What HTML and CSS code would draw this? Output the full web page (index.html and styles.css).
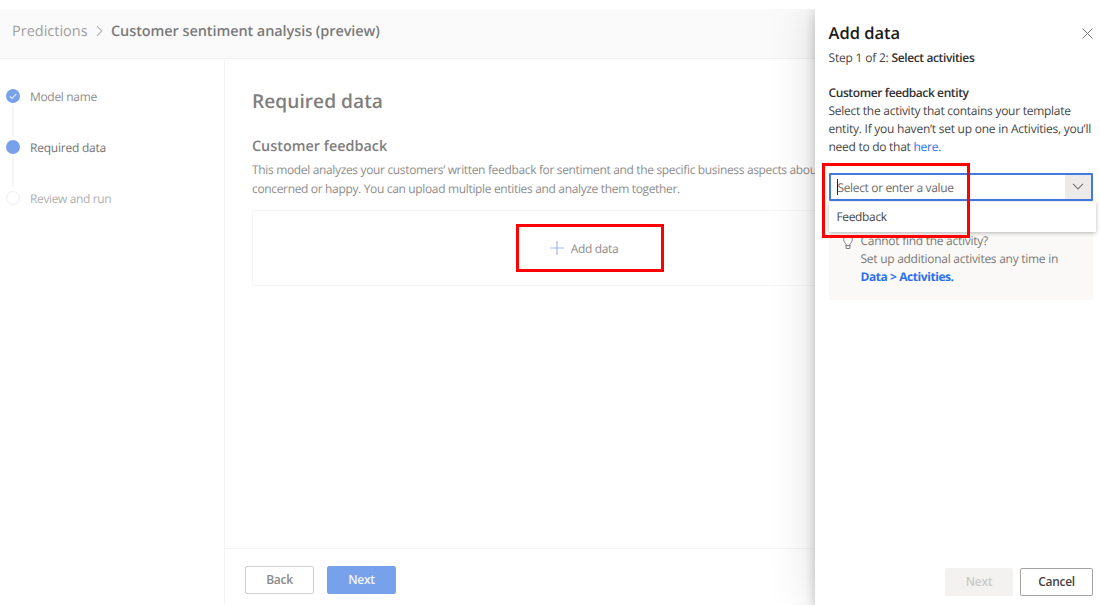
FILE: index.html
```html
<!DOCTYPE html>
<html lang="en">
<head>
<meta charset="utf-8">
<title>Customer sentiment analysis</title>
<link rel="stylesheet" href="styles.css">
</head>
<body>
<div class="app">
  <header class="topbar">
    <span class="crumb">Predictions</span>
    <svg class="crumb-sep" width="7" height="12" viewBox="0 0 7 12"><path d="M1 1.2 5.8 6 1 10.8"/></svg>
    <h1 class="crumb-current">Customer sentiment analysis (preview)</h1>
  </header>
  <div class="body">
    <nav class="steps">
      <div class="step">
        <span class="dot done"><svg width="14" height="14" viewBox="0 0 14 14"><path d="M3.8 7.2 6 9.4 10.3 4.9"/></svg></span>
        <span class="step-label">Model name</span>
      </div>
      <div class="line"></div>
      <div class="step">
        <span class="dot done"></span>
        <span class="step-label current">Required data</span>
      </div>
      <div class="line"></div>
      <div class="step">
        <span class="dot todo"></span>
        <span class="step-label pending">Review and run</span>
      </div>
    </nav>
    <main class="main">
      <section class="content">
        <h2 class="title">Required data</h2>
        <h3 class="subtitle">Customer feedback</h3>
        <p class="desc">This model analyzes your customers’ written feedback for sentiment and the specific business aspects about<br>concerned or happy. You can upload multiple entities and analyze them together.</p>
        <div class="card">
          <svg width="14" height="14" viewBox="0 0 14 14"><path d="M7 0V14M0 7H14"/></svg>
          <span class="add-label">Add data</span>
        </div>
      </section>
      <footer class="actions">
        <button class="btn back">Back</button>
        <button class="btn next">Next</button>
      </footer>
    </main>
  </div>
  <aside class="panel">
    <div class="panel-head">
      <h2 class="panel-title">Add data</h2>
      <svg class="close" width="11" height="11" viewBox="0 0 11 11"><path d="M.5.5 10.5 10.5M10.5.5.5 10.5"/></svg>
    </div>
    <p class="panel-step">Step 1 of 2: <b>Select activities</b></p>
    <h3 class="field-title">Customer feedback entity</h3>
    <p class="field-desc">Select the activity that contains your template<br><span class="wide">entity. If you haven’t set up one in Activities, you’ll</span><br>need to do that <a>here.</a></p>
    <div class="combo">
      <span class="caret"></span>
      <span class="placeholder">Select or enter a value</span>
      <span class="arrow"><svg width="12" height="7" viewBox="0 0 12 7"><path d="M1 .8 6 5.8 11 .8"/></svg></span>
      <div class="menu"><span>Feedback</span></div>
    </div>
    <div class="hint">
      <svg class="bulb" width="10" height="15" viewBox="0 0 10 15"><path d="M3.1 11.2V9.6C2.6 8 .7 7 .7 4.8a4.3 4.3 0 0 1 8.6 0C9.3 7 7.4 8 6.9 9.6v1.6M3.1 10.6H6.9M3.1 10V13.5H6.9V10"/></svg>
      <div class="hint-text">Cannot find the activity?<br>Set up additional activites any time in<br><a class="hint-link">Data &gt; Activities.</a></div>
    </div>
    <div class="panel-actions">
      <button class="btn disabled">Next</button>
      <button class="btn cancel">Cancel</button>
    </div>
  </aside>
  <div class="mark mark-add"></div>
  <div class="mark mark-combo"></div>
</div>
</body>
</html>
```
FILE: styles.css
```css
* { box-sizing: border-box; }
body { margin: 0; background: #fff; font: 12px/18px "Open Sans", "Noto Sans", sans-serif; letter-spacing: -.27px; text-rendering: geometricPrecision; }
h1, h2, h3, p { margin: 0; font-weight: 600; }
p { font-weight: 400; }
svg { fill: none; flex: none; display: block; }
.app { position: relative; width: 1100px; height: 607px; padding: 9px 0 2px; display: flex; flex-direction: column; overflow: hidden; white-space: nowrap; }
.topbar { height: 50px; flex: none; background: #fafafa; border-bottom: 1px solid #f1f1f1; display: flex; align-items: center; padding: 0 0 5px 12px; }
.crumb { font-size: 14.5px; color: #a09f9e; width: 84px; letter-spacing: 0; padding-top: 1px; }
.crumb-sep { stroke: #b4b4b4; stroke-width: 1.1; margin-right: 8px; }
.crumb-current { font-size: 14.5px; color: #7c7b7a; letter-spacing: -.09px; padding-top: 2px; }
.body { flex: 1; display: flex; min-height: 0; }
.steps { width: 225px; border-right: 1px solid #f4f4f4; padding: 29px 0 0 6px; }
.step { height: 15px; display: flex; align-items: center; }
.dot { width: 14px; height: 14px; border-radius: 50%; flex: none; margin-right: 10px; }
.done { background: #78a1ec; }
.done svg { stroke: #e4edfc; stroke-width: 1.1; }
.todo { border: 1.5px solid #eee; }
.line { width: 2px; height: 31px; margin: 2px 0 3.4px 6px; background: #f5f5f5; }
.step-label { color: #8f8e8d; padding-top: 2px; letter-spacing: -.32px; }
.current { color: #757473; font-weight: 500; letter-spacing: -.22px; padding-top: 3px; }
.pending { color: #b0afae; letter-spacing: -.38px; }
.main { flex: 1; display: flex; flex-direction: column; min-width: 0; }
.content { flex: 1; padding: 27px 0 0 27px; }
.title { font-size: 19.2px; line-height: 30px; color: #7f7e7d; letter-spacing: 0; }
.subtitle { font-size: 14.4px; line-height: 20px; color: #7f7e7d; margin-top: 21px; letter-spacing: 0; }
.desc { color: #8e8d8c; line-height: 18.5px; margin-top: 4px; letter-spacing: -.34px; }
.card { height: 76px; width: 663px; margin-top: 12px; border: 1px solid #f5f5f5; border-right: 0; display: flex; align-items: center; justify-content: center; gap: 7px; }
.card svg { stroke: #9dbaf0; stroke-width: 1.2; }
.add-label { color: #8e8d8c; padding-top: 1px; letter-spacing: -.35px; }
.actions { height: 57px; border-top: 1px solid #f4f4f4; padding: 17px 0 0 20px; display: flex; gap: 13px; }
.btn { height: 28px; width: 69px; padding: 0; border: 1px solid #d0d0d0; border-radius: 2px; background: #fff; font: 600 12px/24px "Open Sans", "Noto Sans", sans-serif; letter-spacing: -.3px; }
.back { color: #8a8988; border-color: #cfcfcf; }
.next { color: #f3f7fe; background: #78a1ec; border-color: #78a1ec; }
.panel { position: absolute; left: 815px; top: 9px; width: 285px; height: 596px; padding: 12px 7px 0 13.5px; background: #fff; clip-path: inset(0 0 0 -70px); box-shadow: 0 4px 11px rgba(0,0,0,.22), 0 0 46px rgba(0,0,0,.14); display: flex; flex-direction: column; color: #484644; }
.panel-head { height: 24px; display: flex; justify-content: space-between; align-items: center; }
.panel-title { font-size: 16.5px; color: #1b1a19; letter-spacing: 0; }
.close { stroke: #777; stroke-width: 1; }
.panel-step { margin-top: 4px; letter-spacing: -.2px; }
.panel-step b { font-weight: 600; color: #323130; letter-spacing: -.37px; }
.field-title { font-size: 12px; margin-top: 17px; line-height: 18px; color: #323130; letter-spacing: -.4px; }
.field-desc { line-height: 18.2px; }
.wide { letter-spacing: -.24px; }
a { color: #2b6fee; }
.combo { position: relative; height: 28px; width: 264px; margin-top: 16px; border: 2px solid #4279df; border-radius: 1px; display: flex; align-items: center; padding-left: 6px; background: #fff; color: #6d6b69; flex: none; }
.caret { width: 1px; height: 16px; background: #222; }
.placeholder { flex: 1; padding-top: 3px; letter-spacing: -.35px; }
.arrow { width: 26px; align-self: stretch; background: #edebe9; display: grid; place-items: center; }
.arrow svg { stroke: #777; stroke-width: 1.2; }
.menu { position: absolute; left: -2px; top: 27px; width: 267px; height: 30px; padding: 6px 8px; background: #fff; color: #484644; box-shadow: 0 1px 4px rgba(0,0,0,.28); z-index: 1; letter-spacing: -.35px; }
.hint { height: 74px; width: 264px; margin-top: 25px; background: #faf9f8; padding: 6px 0 0 14px; display: flex; color: #7a7876; flex: none; }
.bulb { stroke: #7f7d7b; stroke-width: 1; margin: 3px 8px 0 0; }
.hint-link { color: #2b6fee; font-weight: 700; letter-spacing: -.43px; }
.panel-actions { margin-top: auto; padding: 0 0 9px; display: flex; justify-content: flex-end; gap: 7px; }
.disabled { background: #f3f2f1; border-color: #f3f2f1; color: #cbcac9; width: 68px; }
.cancel { width: 73px; border-color: #a5a4a3; color: #454341; }
.mark { position: absolute; border: 3px solid #fe0000; z-index: 3; }
.mark-add { left: 516px; top: 224px; width: 148px; height: 48px; }
.mark-combo { left: 822px; top: 163px; width: 148px; height: 75px; }
```
